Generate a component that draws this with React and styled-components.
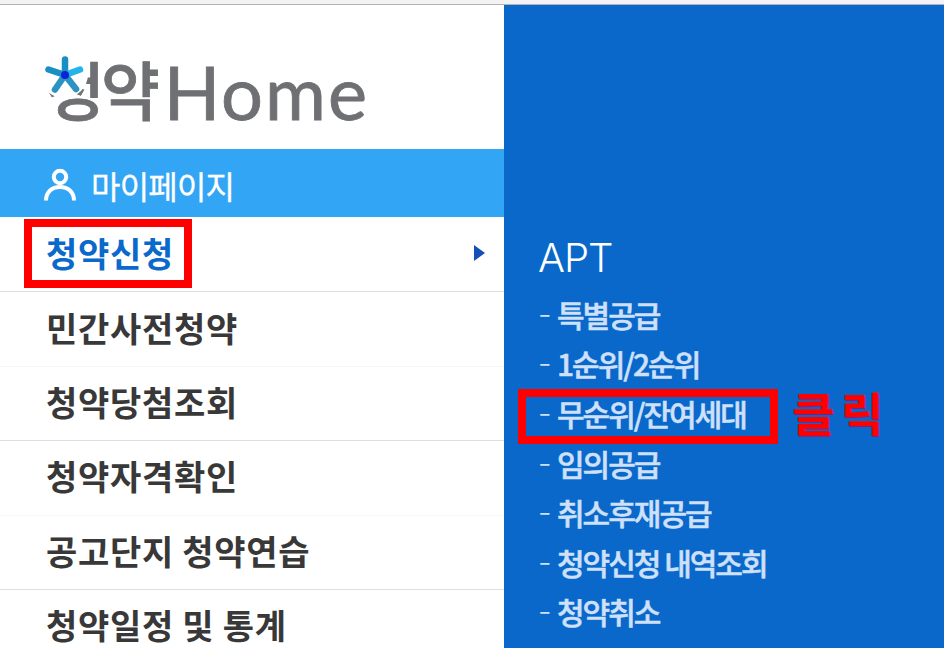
import React from "react";
import styled, { createGlobalStyle } from "styled-components";

const Global = createGlobalStyle`
  html, body { margin: 0; padding: 0; background: #fff; }
  body { width: 944px; height: 648px; overflow: hidden; font-family: "Noto Sans CJK KR", "Noto Sans", sans-serif; }
`;
const Page = styled.div`
  width: 944px; height: 648px; overflow: hidden; display: flex; flex-direction: column; position: relative;
`;
const TopEdge = styled.div`
  height: 4px; flex: none; background: #f3f3f4; border-bottom: 1px solid #b4b4b6;
`;
const Body = styled.div`
  flex: 1; display: flex; min-height: 0;
`;
const Sidebar = styled.nav`
  width: 504px; flex: none; display: flex; flex-direction: column;
`;
const LogoArea = styled.div`
  height: 144px; flex: none; position: relative; padding: 44px 0 0 46px; box-sizing: border-box;
`;
const LogoText = styled.div`
  display: flex; align-items: flex-start; color: #6f7073; height: 85px;
`;
const LogoKo = styled.span`
  font-size: 64px; font-weight: 500; letter-spacing: -4px; line-height: 76px;
  -webkit-text-stroke: 0.8px #6f7073;
`;
const LogoEn = styled.span`
  font-family: Lato, sans-serif; font-size: 74px; font-weight: 400; letter-spacing: 2px; margin-left: 8px; line-height: 85px;
  -webkit-text-stroke: 0.8px #6f7073;
`;
const Star = styled.svg`
  position: absolute; left: 44px; top: 49px; width: 46px; height: 46px; overflow: visible;
`;
const MyPage = styled.div`
  height: 68px; flex: none; box-sizing: border-box; background: #33a5f5; color: #fff; display: flex; align-items: center;
  gap: 15px; padding: 4px 0 0 44px; font-size: 32px; font-weight: 400; letter-spacing: -0.8px;
  -webkit-text-stroke: 0.3px #fff;
`;
const Row = styled.div`
  height: ${p => (p.$active ? 75.4 : 74.4)}px; flex: none; box-sizing: border-box; display: flex; align-items: center;
  padding: 0 19px ${p => (p.$active ? 3 : 4)}px 46px; border-bottom: 1px solid ${p => (p.$faint ? "#f6f6f6" : "#dedede")};
  justify-content: space-between;
  font-size: 34px; font-weight: 700; letter-spacing: 0.7px; color: ${p => (p.$active ? "#0a69cb" : "#383838")};
`;
const Arrow = styled.span`
  width: 0; height: 0; border-left: 11px solid #1450b8; border-top: 8px solid transparent; border-bottom: 8px solid transparent;
`;
const RedBox = styled.div`
  position: absolute; border: 8px solid #f00; box-sizing: border-box;
  left: ${p => p.$l}px; top: ${p => p.$t}px; width: ${p => p.$w}px; height: ${p => p.$h}px;
`;
const Panel = styled.section`
  flex: 1; background: #0968ca; padding: 228px 0 0 34px; position: relative;
`;
const PanelTitle = styled.h2`
  margin: 0 0 6px; color: #fff; font-family: Inter, sans-serif; font-size: 40px; font-weight: 300; line-height: 50px; letter-spacing: -1px;
`;
const SubList = styled.ul`
  list-style: none; margin: 0; padding: 0; display: flex; flex-direction: column;
`;
const SubItem = styled.li`
  height: 49.6px; display: flex; align-items: center; color: #cfe0fa; font-size: 30px; font-weight: 500; letter-spacing: -2px;
  white-space: pre; -webkit-text-stroke: 0.5px #cfe0fa;
`;
const Dash = styled.span`
  width: 19px; flex: none; font-family: Inter, sans-serif; font-size: 30px; font-weight: 300; letter-spacing: 0; -webkit-text-stroke: 0;
`;
const Click = styled.span`
  position: absolute; left: 288px; top: 381px; color: #f00; font-size: 46px; font-weight: 700; letter-spacing: 0; word-spacing: -4px; line-height: 50px;
  text-shadow: 1px 1px 0 #8a1a7a;
`;

const items = ["특별공급", "1순위/2순위", "무순위/잔여세대", "임의공급", "취소후재공급", "청약신청 내역조회", "청약취소"];
const rows = ["민간사전청약", "청약당첨조회", "청약자격확인", "공고단지 청약연습", "청약일정 및 통계"];

export default function App() {
  return (
    <Page>
      <Global />
      <TopEdge />
      <Body>
        <Sidebar>
          <LogoArea>
            <LogoText>
              <LogoKo>청약</LogoKo>
              <LogoEn>Home</LogoEn>
            </LogoText>
            <Star viewBox="0 0 46 46">
              <circle cx="20" cy="20" r="24" fill="#fff" />
              <g strokeWidth="6.5" strokeLinecap="round" fill="none">
                <path d="M21 21V5.5" stroke="#1a8fc2" />
                <path d="M21 21L4.5 15.5" stroke="#1a8fc2" />
                <path d="M21 21L36 15.5" stroke="#22b5ea" />
                <path d="M21 21L11 35.5" stroke="#2a93c4" />
                <path d="M21 21L32 35" stroke="#2a93c4" />
              </g>
              <circle cx="21" cy="21" r="4" fill="#0a22d8" />
            </Star>
          </LogoArea>
          <MyPage>
            <svg width="32" height="34" viewBox="0 0 32 34" fill="none" stroke="#fff" strokeWidth="4">
              <circle cx="16" cy="9" r="6.2" />
              <path d="M2 32.500c0-8.500 6-13.500 14-13.500s14 5 14 13.500" />
            </svg>
            마이페이지
          </MyPage>
          <Row $active>
            청약신청
            <Arrow />
          </Row>
          {rows.map((r, i) => (
            <Row key={r} $faint={i % 2 === 0}>{r}</Row>
          ))}
        </Sidebar>
        <Panel>
          <PanelTitle>APT</PanelTitle>
          <SubList>
            {items.map(t => (
              <SubItem key={t}><Dash>-</Dash>{t}</SubItem>
            ))}
          </SubList>
          <Click>클 릭</Click>
        </Panel>
      </Body>
      <RedBox $l={24} $t={219} $w={168} $h={69} />
      <RedBox $l={518} $t={389} $w={260} $h={55} />
    </Page>
  );
}
